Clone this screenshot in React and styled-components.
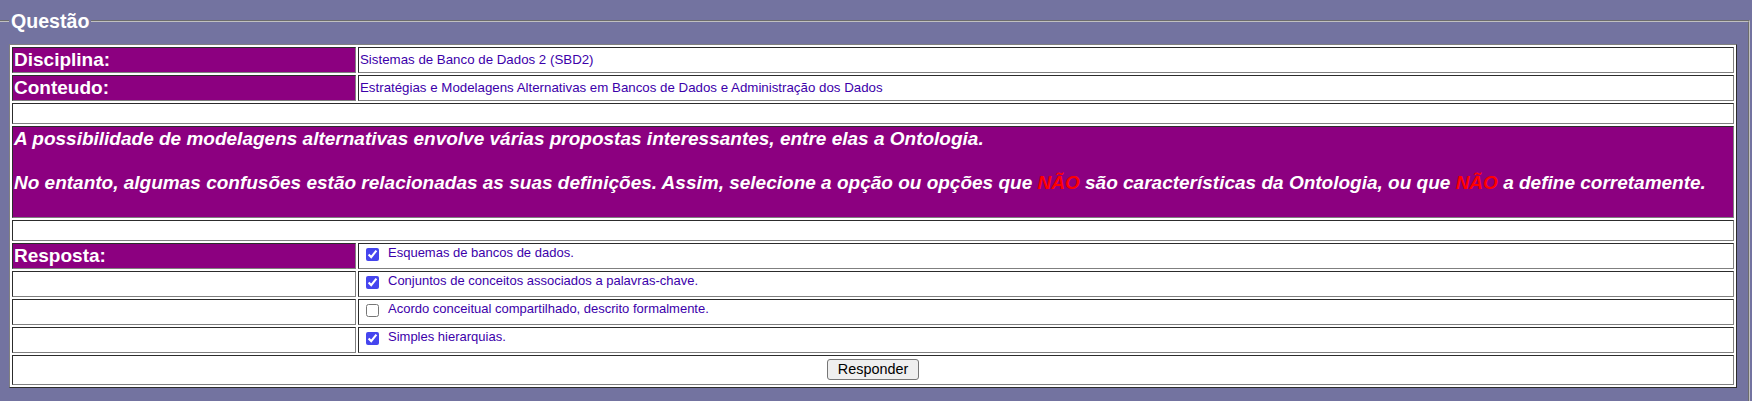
import React from 'react'
import styled, { createGlobalStyle } from 'styled-components'

const GlobalStyle = createGlobalStyle`
  html, body {
    margin: 0;
    background: #7373a0;
  }
  body {
    font-family: "Liberation Sans", Arial, sans-serif;
    overflow: hidden;
  }
`

const Fieldset = styled.fieldset`
  margin: 10px 2px 0 -3px;
  padding: 12px 11px 13px 10px;
  border: 2px groove #c0c0c0;
  min-width: 0;
`

const Legend = styled.legend`
  padding: 0 2px;
  color: #ffffff;
  font-weight: bold;
  font-size: 19.6px;
  line-height: 22px;
`

const Table = styled.table`
  width: 100%;
  background: #ffffff;
  border: 1px outset #808080;
  border-spacing: 2px;
`

const Label = styled.td`
  width: 20%;
  border: 1px inset #808080;
  padding: 1px;
  background: ${p => (p.$filled ? '#8c0080' : '#ffffff')};
  color: #ffffff;
  font-weight: bold;
  font-size: 19px;
  line-height: 22px;
`

const Value = styled.td`
  border: 1px inset #808080;
  padding: 1px;
  color: #3c00aa;
  font-size: 13.3px;
  line-height: 16px;
  vertical-align: middle;
`

const Spacer = styled.td`
  border: 1px inset #808080;
  padding: 1px;
  height: 17px;
`

const Question = styled.td`
  border: 1px inset #808080;
  padding: 1px;
  background: #8c0080;
  color: #ffffff;
  font-weight: bold;
  font-style: italic;
  font-size: 19px;
  line-height: 22px;
`

const Para = styled.p`
  margin: 0 0 22px;
`

const No = styled.span`
  color: #ff0000;
`

const OptionCell = styled.td`
  border: 1px inset #808080;
  padding: 1px;
  vertical-align: top;
`

const Option = styled.label`
  display: flex;
  align-items: flex-start;
  color: #3c00aa;
  font-size: 13px;
  line-height: 15px;
`

const Check = styled.input`
  width: 13px;
  height: 13px;
  margin: 3px 9px 0 6px;
  accent-color: #4545ee;
`

const ActionCell = styled.td`
  border: 1px inset #808080;
  padding: 3px 1px 4px;
  text-align: center;
`

const Button = styled.button`
  height: 21px;
  padding: 1px 10px;
  border: 1px solid #767676;
  border-radius: 3px;
  background: #efefef;
  color: #000000;
  font-family: "Liberation Sans", Arial, sans-serif;
  font-size: 14.4px;
  line-height: 17px;
`

const options = [
  { text: 'Esquemas de bancos de dados.', checked: true },
  { text: 'Conjuntos de conceitos associados a palavras-chave.', checked: true },
  { text: 'Acordo conceitual compartilhado, descrito formalmente.', checked: false },
  { text: 'Simples hierarquias.', checked: true },
]

const App = () => (
  <>
    <GlobalStyle />
    <Fieldset>
      <Legend>Questão</Legend>
      <Table>
        <tbody>
          <tr>
            <Label $filled>Disciplina:</Label>
            <Value>Sistemas de Banco de Dados 2 (SBD2)</Value>
          </tr>
          <tr>
            <Label $filled>Conteudo:</Label>
            <Value>Estratégias e Modelagens Alternativas em Bancos de Dados e Administração dos Dados</Value>
          </tr>
          <tr>
            <Spacer colSpan={2} />
          </tr>
          <tr>
            <Question colSpan={2}>
              <Para>A possibilidade de modelagens alternativas envolve várias propostas interessantes, entre elas a Ontologia.</Para>
              <Para>
                No entanto, algumas confusões estão relacionadas as suas definições. Assim, selecione a opção ou opções que <No>NÃO</No> são características da Ontologia, ou que <No>NÃO</No> a define corretamente.
              </Para>
            </Question>
          </tr>
          <tr>
            <Spacer colSpan={2} />
          </tr>
          {options.map((o, i) => (
            <tr key={o.text}>
              <Label $filled={i === 0}>{i === 0 ? 'Resposta:' : '\u00a0'}</Label>
              <OptionCell>
                <Option>
                  <Check type="checkbox" defaultChecked={o.checked} />
                  {o.text}
                </Option>
              </OptionCell>
            </tr>
          ))}
          <tr>
            <ActionCell colSpan={2}>
              <Button type="button">Responder</Button>
            </ActionCell>
          </tr>
        </tbody>
      </Table>
    </Fieldset>
  </>
)

export default App
